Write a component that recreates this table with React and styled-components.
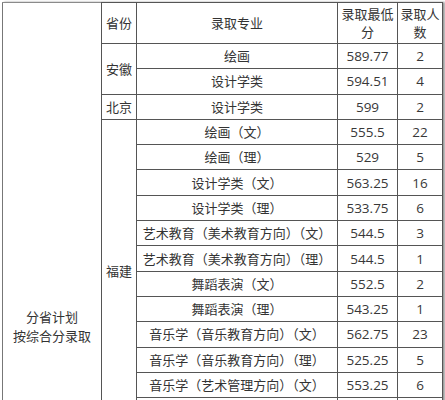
import React from "react";
import styled, { createGlobalStyle } from "styled-components";

const GlobalStyle = createGlobalStyle`
  html, body {
    margin: 0;
    padding: 0;
    background: #fff;
  }
  body {
    font-family: "Noto Sans CJK SC", "Noto Sans", sans-serif;
  }
`;

const Page = styled.div`
  width: 445px;
  height: 400px;
  overflow: hidden;
  box-sizing: border-box;
  padding: 2px 0 0 2px;
`;

const Table = styled.table`
  border-collapse: collapse;
  table-layout: fixed;
  width: 440px;
  color: #333;
  font-size: 13px;
  box-shadow: 2px 0 2px #9a9a9a;
`;

const Row = styled.tr`
  height: ${(p) => p.$h || 25.3}px;
`;

const Cell = styled.td`
  border: 1px solid #555;
  padding: 0 2px;
  text-align: center;
  vertical-align: middle;
  line-height: 18px;
  white-space: nowrap;
  overflow: hidden;
`;

const HeadCell = styled(Cell)`
  white-space: normal;
  word-break: break-all;
  padding: 0 1px;
`;

const NumCell = styled(Cell)`
  font-family: "Open Sans", "Liberation Sans", sans-serif;
  font-size: 13.5px;
  color: #383838;
`;

const PlanCell = styled(Cell)`
  vertical-align: top;
  padding-top: 304px;
  line-height: 19px;
  white-space: normal;
  border-top-color: #8a8a8a;
  border-left-color: #777;
`;

const provinces = [
  {
    name: "安徽",
    rows: [
      ["绘画", "589.77", "2"],
      ["设计学类", "594.51", "4"],
    ],
  },
  {
    name: "北京",
    rows: [["设计学类", "599", "2"]],
  },
  {
    name: "福建",
    rows: [
      ["绘画（文）", "555.5", "22"],
      ["绘画（理）", "529", "5"],
      ["设计学类（文）", "563.25", "16"],
      ["设计学类（理）", "533.75", "6"],
      ["艺术教育（美术教育方向）（文）", "544.5", "3"],
      ["艺术教育（美术教育方向）（理）", "544.5", "1"],
      ["舞蹈表演（文）", "552.5", "2"],
      ["舞蹈表演（理）", "543.25", "1"],
      ["音乐学（音乐教育方向）（文）", "562.75", "23"],
      ["音乐学（音乐教育方向）（理）", "525.25", "5"],
      ["音乐学（艺术管理方向）（文）", "553.25", "6"],
      // the next row is cut off at the bottom edge of the shot
      ["", "", ""],
    ],
  },
];

const totalRows = provinces.reduce((n, p) => n + p.rows.length, 0);

export default function App() {
  return (
    <>
      <GlobalStyle />
      <Page>
        <Table>
          <colgroup>
            <col style={{ width: 99 }} />
            <col style={{ width: 35 }} />
            <col style={{ width: 201 }} />
            <col style={{ width: 60 }} />
            <col style={{ width: 45 }} />
          </colgroup>
          <tbody>
            <Row $h={41}>
              <PlanCell rowSpan={totalRows + 1}>
                分省计划
                <br />
                按综合分录取
              </PlanCell>
              <HeadCell>省份</HeadCell>
              <HeadCell>录取专业</HeadCell>
              <HeadCell>录取最低分</HeadCell>
              <HeadCell>录取人数</HeadCell>
            </Row>
            {provinces.map((prov) =>
              prov.rows.map(([major, score, count], i) => (
                <Row key={prov.name + i}>
                  {i === 0 && <Cell rowSpan={prov.rows.length}>{prov.name}</Cell>}
                  <Cell>{major}</Cell>
                  <NumCell>{score}</NumCell>
                  <NumCell>{count}</NumCell>
                </Row>
              ))
            )}
          </tbody>
        </Table>
      </Page>
    </>
  );
}
